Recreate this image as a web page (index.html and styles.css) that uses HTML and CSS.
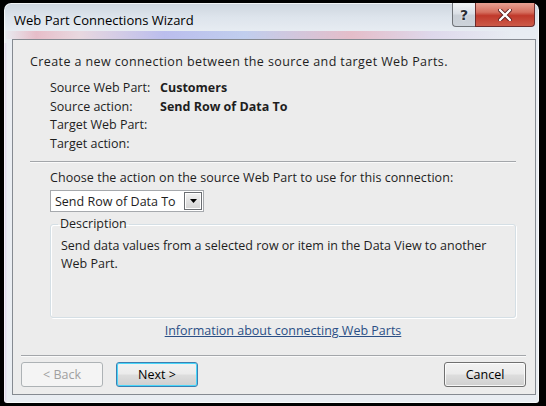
FILE: index.html
```html
<!DOCTYPE html>
<html>
<head>
<meta charset="utf-8">
<link rel="stylesheet" href="styles.css">
</head>
<body>
<div class="window">
  <div class="titlebar">
    <div class="title">Web Part Connections Wizard</div>
    <div class="caption">
      <div class="cbtn help">?</div>
      <div class="cbtn close">
        <svg width="14" height="12" viewBox="0 0 14 12"><path d="M2 1 L12 11 M12 1 L2 11" stroke="#5a1d1d" stroke-width="4" stroke-linecap="round"/><path d="M2 1 L12 11 M12 1 L2 11" stroke="#fff" stroke-width="2.4" stroke-linecap="round"/></svg>
      </div>
    </div>
  </div>
  <div class="client">
    <div class="main">
      <p class="intro">Create a new connection between the source and target Web Parts.</p>
      <div class="info">
        <div class="lbl">Source Web Part:</div><div class="val">Customers</div>
        <div class="lbl">Source action:</div><div class="val">Send Row of Data To</div>
        <div class="lbl">Target Web Part:</div><div class="val"></div>
        <div class="lbl">Target action:</div><div class="val"></div>
      </div>
      <div class="sep"></div>
      <div class="choose">
        <div class="prompt">Choose the action on the source Web Part to use for this connection:</div>
        <div class="combo">
          <span class="combo-text">Send Row of Data To</span>
          <span class="combo-btn"><svg width="7" height="4" viewBox="0 0 7 4"><path d="M0 0 H7 L3.5 4 Z" fill="#000"/></svg></span>
        </div>
        <fieldset class="desc">
          <legend>Description</legend>
          <div class="desc-text">Send data values from a selected row or item in the Data View to another Web Part.</div>
        </fieldset>
        <div class="linkrow"><a class="link" href="#">Information about connecting Web Parts</a></div>
      </div>
    </div>
    <div class="footer">
      <div class="fsep"></div>
      <div class="buttons">
        <div class="btn disabled">&lt; Back</div>
        <div class="btn default">Next &gt;</div>
        <div class="spacer"></div>
        <div class="btn">Cancel</div>
      </div>
    </div>
  </div>
</div>
</body>
</html>
```
FILE: styles.css
```css
* { box-sizing: border-box; }
html, body { margin: 0; padding: 0; }
body {
  width: 546px;
  height: 406px;
  background: #000;
  font-family: "Open Sans", "Noto Sans", sans-serif;
  font-size: 12.5px;
  color: #1e1e1e;
  overflow: hidden;
  padding-top: 3px;
  padding-left: 4px;
}
.window {
  width: 535px;
  height: 400px;
  border-radius: 7px 7px 3px 3px;
  padding: 0 3px 8px 8px;
  display: flex;
  flex-direction: column;
  box-shadow: inset 0 0 0 1px rgba(255,255,255,0.7);
  background:
    linear-gradient(to right, rgba(190,150,215,0.45), rgba(200,170,225,0) 3px) 0 40px / 100% 360px no-repeat,
    linear-gradient(to right, rgba(255,255,255,0) 0, rgba(230,120,140,0.4) 6%, rgba(235,170,180,0.3) 14%, rgba(120,120,230,0.4) 30%, rgba(120,150,230,0.35) 45%, rgba(225,120,140,0.4) 65%, rgba(200,170,220,0.3) 80%, rgba(255,255,255,0) 95%) 0 28px / 100% 8px no-repeat,
    linear-gradient(#cdd5de 0, #dde4ec 14px, #e7ecf2 28px, #ebeef3 60px, #e9edf2 100%);
}
.titlebar {
  height: 36px;
  display: flex;
  align-items: flex-start;
  flex: none;
}
.title {
  padding-left: 2px;
  padding-top: 8px;
  font-size: 13px;
  color: #000;
}
.caption {
  margin-left: auto;
  margin-right: 1px;
  display: flex;
  height: 24px;
}
.cbtn {
  height: 24px;
  display: flex;
  align-items: center;
  justify-content: center;
  border: 1px solid #6f7378;
  border-top: none;
}
.help {
  width: 23px;
  border-radius: 0 0 0 4px;
  background: linear-gradient(#f2f4f6, #dbe0e6 45%, #c9cfd6 55%, #cdd3da);
  color: #2a2e33;
  font-weight: bold;
  font-family: "DejaVu Sans", sans-serif;
  font-size: 14px;
  text-shadow: 0 0 2px #fff;
  border-right: none;
}
.close {
  width: 60px;
  border-radius: 0 0 4px 0;
  border-color: #6b2b2b;
  background: linear-gradient(#e8a193, #d56f5f 40%, #c0392b 55%, #cc5a48);
}
.client {
  flex: 1;
  background: #ececec;
  border: 1px solid #858a91;
  display: flex;
  flex-direction: column;
}
.main {
  flex: 1;
  padding-left: 17px;
  padding-right: 19px;
}
.intro {
  margin: 13px 0 0 0;
  line-height: 18px;
  letter-spacing: 0.4px;
}
.info {
  margin: 8px 0 0 20px;
  display: grid;
  grid-template-columns: 110px 1fr;
  grid-auto-rows: 18.5px;
  line-height: 18.5px;
}
.val { font-weight: bold; }
.sep {
  margin-top: 8px;
  height: 1px;
  background: #a3a6aa;
  border-bottom: 1px solid #fafafa;
  box-sizing: content-box;
}
.choose {
  padding-left: 20px;
}
.prompt {
  margin-top: 6px;
  line-height: 18px;
  letter-spacing: 0.05px;
}
.combo {
  margin-top: 3px;
  width: 154px;
  height: 22px;
  background: #fff;
  border: 1px solid #a6a9ad;
  display: flex;
  align-items: center;
  padding-left: 4px;
}
.combo-text { flex: 1; white-space: nowrap; }
.combo-btn {
  width: 18px;
  height: 18px;
  margin-right: 1px;
  border: 1px solid #6b6e72;
  background: linear-gradient(#f3f3f3, #e2e2e2 50%, #d4d4d4);
  box-shadow: inset 0 0 0 1px #fff;
  display: flex;
  align-items: center;
  justify-content: center;
}
.desc {
  margin: 4px 0 0 0;
  padding: 0 10px 0 10px;
  height: 102px;
  border: 1px solid #d5dfe5;
  border-radius: 3px;
  box-shadow: inset 1px 1px 0 #fff, 1px 1px 0 #fff;
}
.desc legend {
  margin-left: -3px;
  padding: 0 2px;
  line-height: 16px;
}
.desc-text {
  margin-top: 5px;
  line-height: 18px;
}
.linkrow {
  text-align: center;
  margin-top: 4px;
  line-height: 18px;
}
.link {
  color: #2b4f86;
  text-decoration: underline;
}
.footer {
  padding: 0 9px 7px 8px;
}
.fsep {
  height: 1px;
  background: #a3a6aa;
  border-bottom: 1px solid #fafafa;
  box-sizing: content-box;
}
.buttons {
  margin-top: 5px;
  display: flex;
  gap: 13px;
}
.spacer { flex: 1; }
.btn {
  width: 82px;
  height: 25px;
  border: 1px solid #707070;
  border-radius: 3px;
  background: linear-gradient(#f2f2f2, #ebebeb 48%, #dddddd 52%, #cfcfcf);
  box-shadow: inset 0 0 0 1px rgba(255,255,255,0.8);
  display: flex;
  align-items: center;
  justify-content: center;
  color: #000;
}
.btn.disabled {
  border-color: #adb2b5;
  background: #f4f4f4;
  color: #a0a0a0;
  box-shadow: none;
}
.btn.default {
  border-color: #3c7fb1;
  box-shadow: inset 0 0 0 1px #48d6fa;
}
```
